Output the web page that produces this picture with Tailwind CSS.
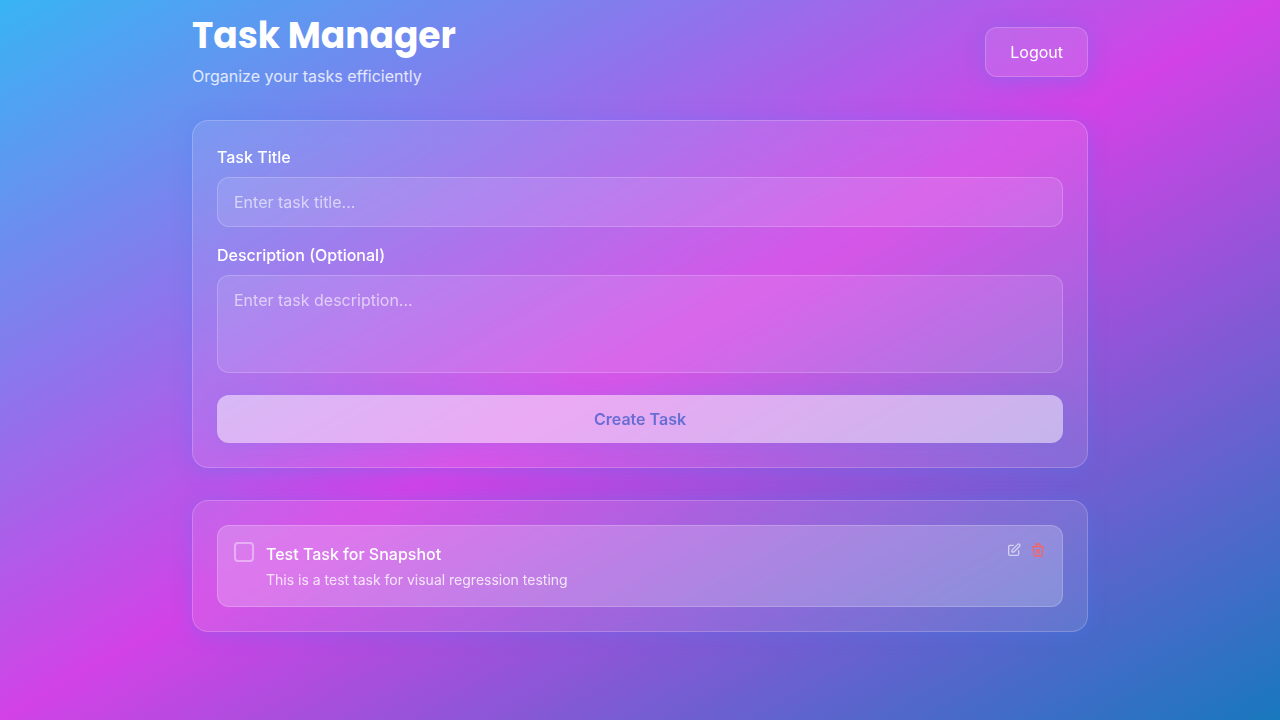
<!DOCTYPE html>
<html lang="en">
<head>
<meta charset="utf-8">
<meta name="viewport" content="width=device-width, initial-scale=1">
<title>Task Manager</title>
<script src="https://cdn.jsdelivr.net/npm/@tailwindcss/browser@4"></script>
</head>
<body class="min-h-screen bg-[linear-gradient(to_bottom_right,#38b4f4,#d242e6,#1878be)] font-[Inter,sans-serif] text-base text-white">
<main class="mx-auto max-w-4xl pt-4 pb-4">
  <header class="mb-8 flex items-center justify-between">
    <div>
      <h1 class="mb-2 font-[Poppins,Inter,sans-serif] text-4xl leading-10 font-bold">Task Manager</h1>
      <p class="text-white/80">Organize your tasks efficiently</p>
    </div>
    <button type="button" class="rounded-xl border border-white/20 bg-white/10 px-6 py-3 shadow-[0_2px_20px_rgba(59,130,246,0.3)] backdrop-blur-md">Logout</button>
  </header>

  <form class="mb-8 rounded-2xl border border-white/20 bg-white/10 p-6 shadow-[0_2px_20px_rgba(59,130,246,0.3)] backdrop-blur-md">
    <label for="title" class="mb-2 block font-medium">Task Title</label>
    <input id="title" type="text" placeholder="Enter task title..." class="mb-4 block w-full rounded-xl border border-white/20 bg-white/10 px-4 py-3 placeholder:text-white/60">
    <label for="description" class="mb-2 block font-medium">Description (Optional)</label>
    <textarea id="description" rows="3" placeholder="Enter task description..." class="mb-[22px] block w-full resize-none rounded-xl border border-white/20 bg-white/10 px-4 py-3 placeholder:text-white/60"></textarea>
    <button type="submit" disabled class="block w-full rounded-xl bg-white py-3 font-semibold text-[#0a80c4] opacity-50 shadow-[0_2px_20px_rgba(59,130,246,0.3)]">Create Task</button>
  </form>

  <section class="rounded-2xl border border-white/20 bg-white/10 p-6 shadow-[0_2px_20px_rgba(59,130,246,0.3)] backdrop-blur-md">
    <ul>
      <li class="flex items-start gap-3 rounded-xl border border-white/20 bg-white/20 p-4">
        <input id="task-1" type="checkbox" class="size-5 shrink-0 appearance-none rounded-sm border-2 border-white/40">
        <div class="grow">
          <label for="task-1" class="block font-medium">Test Task for Snapshot</label>
          <p class="mt-1 text-sm text-white/80">This is a test task for visual regression testing</p>
        </div>
        <div class="flex gap-2">
          <button type="button" aria-label="Edit task" class="text-white/60">
            <svg class="size-4" viewBox="0 0 24 24" fill="none" stroke="currentColor" stroke-width="2" stroke-linecap="round" stroke-linejoin="round"><path d="M11 5H6a2 2 0 00-2 2v11a2 2 0 002 2h11a2 2 0 002-2v-5m-1.414-9.414a2 2 0 112.828 2.828L11.828 15H9v-2.828l8.586-8.586z"/></svg>
          </button>
          <button type="button" aria-label="Delete task" class="text-[#f96462]">
            <svg class="size-4" viewBox="0 0 24 24" fill="none" stroke="currentColor" stroke-width="2" stroke-linecap="round" stroke-linejoin="round"><path d="M19 7l-.867 12.142A2 2 0 0116.138 21H7.862a2 2 0 01-1.995-1.858L5 7m5 4v6m4-6v6m1-10V4a1 1 0 00-1-1h-4a1 1 0 00-1 1v3M4 7h16"/></svg>
          </button>
        </div>
      </li>
    </ul>
  </section>
</main>
</body>
</html>
